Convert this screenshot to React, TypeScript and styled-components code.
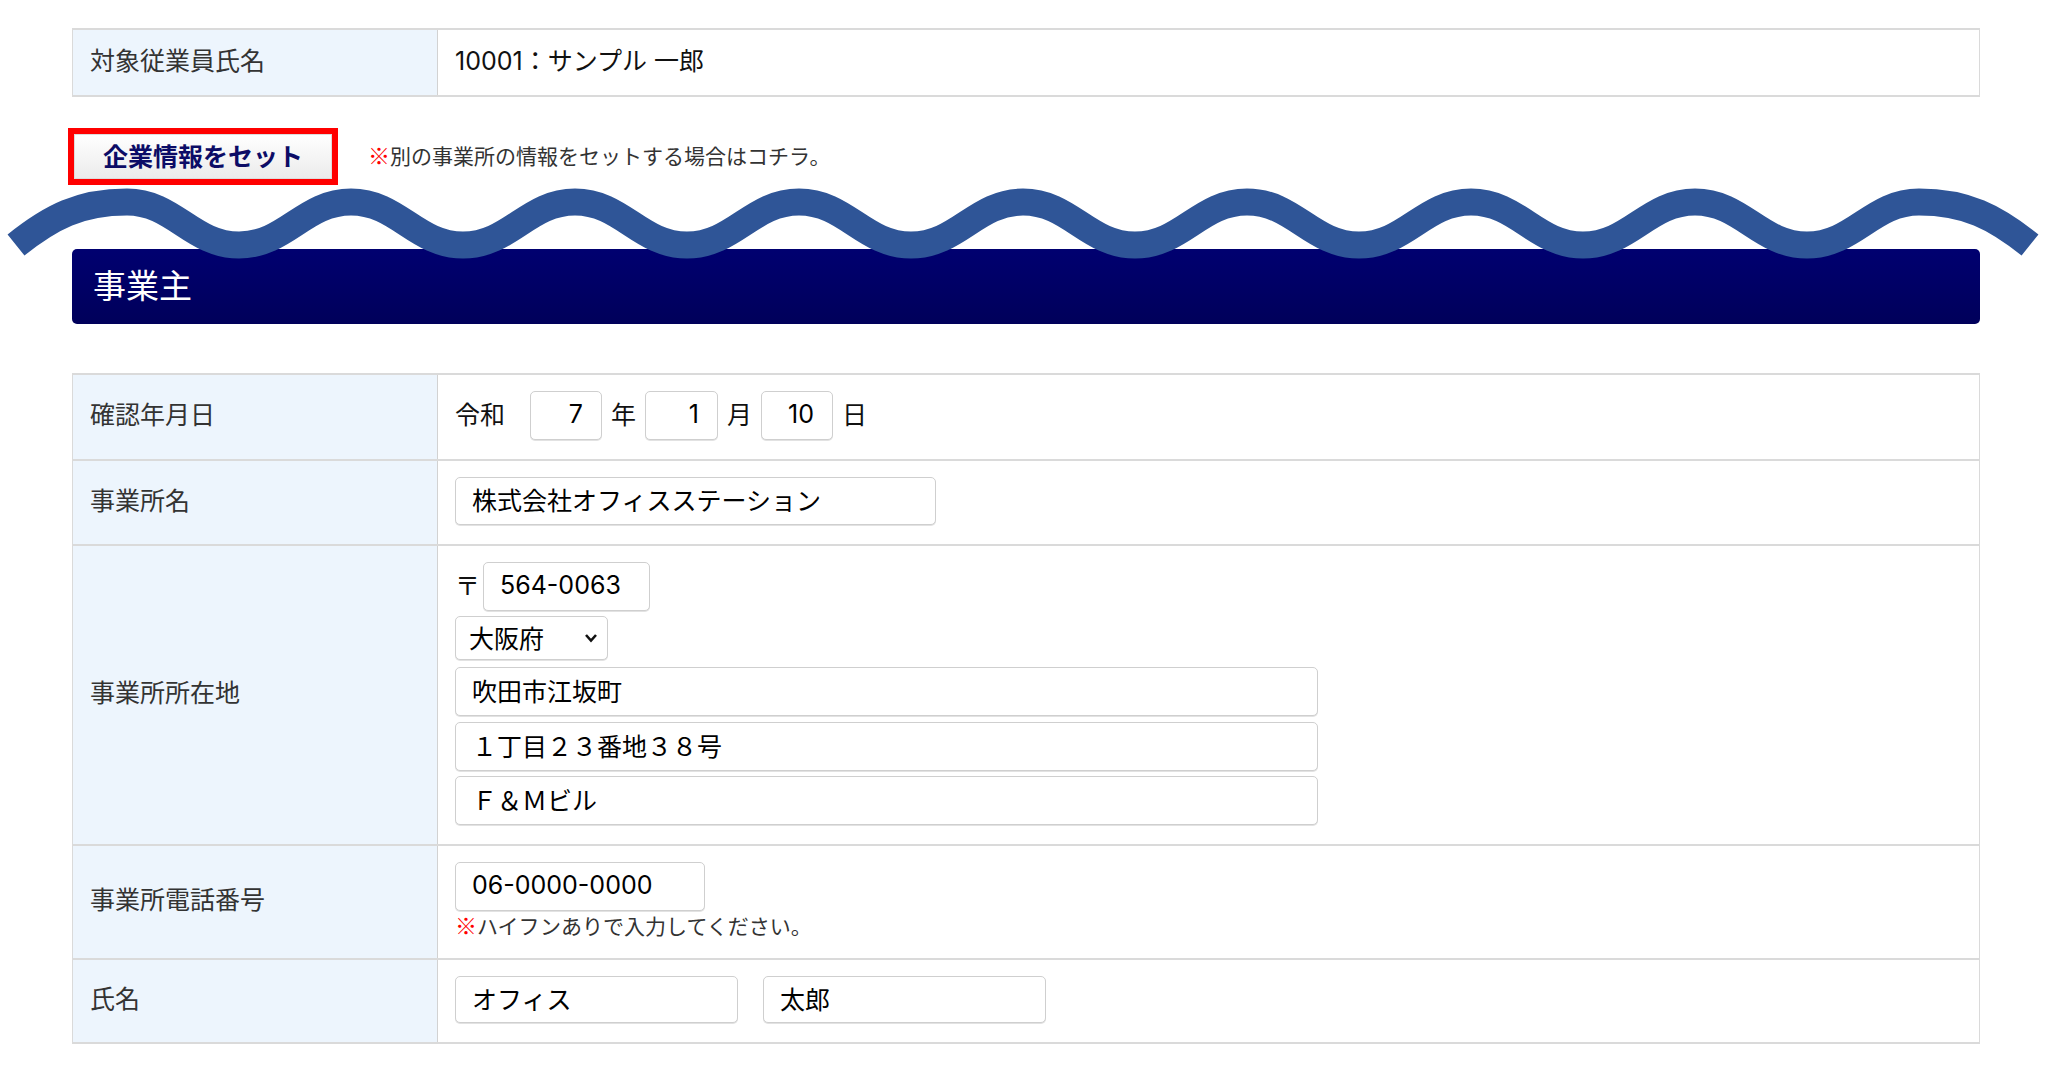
import React from "react";
import styled, { createGlobalStyle } from "styled-components";

const GlobalStyle = createGlobalStyle`
  html, body {
    margin: 0;
    padding: 0;
    background: #fff;
  }
  body {
    font-family: "Noto Sans CJK JP", "Noto Sans", sans-serif;
    color: #222;
  }
  * {
    box-sizing: border-box;
  }
`;

const valueFont = `Inter, "Noto Sans CJK JP", sans-serif`;

const Page = styled.div`
  position: relative;
  width: 2052px;
  padding: 28px 72px 26px;
`;

const FormTable = styled.table`
  width: 100%;
  border-collapse: collapse;
  table-layout: fixed;
  line-height: 1.2;
`;

const Th = styled.th`
  width: 365px;
  background: #edf5fd;
  color: #333;
  font-weight: normal;
  text-align: left;
  font-size: 25px;
  padding: 0 17px 8px;
  vertical-align: middle;
  border: 2px solid #dadada;
  border-left-width: 1px;
  border-right: 1px solid #d2d2d2;
`;

const Td = styled.td<{ $compact?: boolean }>`
  padding: ${(p) => (p.$compact ? "0 17px 4px" : "16px 17px 19px")};
  height: ${(p) => (p.$compact ? "67px" : "auto")};
  font-family: ${valueFont};
  font-size: 25px;
  color: #111;
  vertical-align: middle;
  border: 2px solid #dadada;
  border-right-width: 1px;
  border-left: 1px solid #d2d2d2;
`;

const SetRow = styled.div`
  display: flex;
  align-items: center;
  margin-top: 37px;
  padding-left: 2px;
`;

const SetButton = styled.button`
  width: 258px;
  height: 45px;
  border: none;
  outline: 6px solid #ff0000;
  background: linear-gradient(#ffffff, #ebebeb);
  box-shadow: inset 0 0 0 1px #dcdcdc;
  color: #0c0c66;
  font-family: "Noto Sans CJK JP", sans-serif;
  font-size: 25px;
  font-weight: bold;
  padding: 0 0 4px;
  cursor: pointer;
`;

const Note = styled.div<{ $top?: boolean }>`
  font-family: "Noto Sans CJK JP", sans-serif;
  font-size: 21px;
  line-height: 27px;
  color: #333;
  margin-left: ${(p) => (p.$top ? "36px" : "0")};
  padding-bottom: ${(p) => (p.$top ? "3px" : "0")};
  white-space: nowrap;
`;

const Mark = styled.span`
  color: #ff0000;
  font-weight: bold;
  font-size: 22px;
`;

const SectionBar = styled.h2`
  margin: 70px 0 0;
  height: 75px;
  display: flex;
  align-items: center;
  padding: 0 0 6px 21px;
  border-radius: 5px;
  background: linear-gradient(#000070, #00005a);
  color: #fff;
  font-size: 33px;
  font-weight: normal;
`;

const FormSection = styled.div`
  margin-top: 49px;
`;

const FieldRow = styled.div<{ $gap?: number }>`
  display: flex;
  align-items: center;
  gap: ${(p) => p.$gap ?? 9}px;
  font-family: "Noto Sans CJK JP", sans-serif;
`;

const FieldStack = styled.div`
  display: flex;
  flex-direction: column;
  align-items: flex-start;
`;

const TextInput = styled.input<{ $width: number; $height?: number; $right?: boolean; $mt?: number }>`
  width: ${(p) => p.$width}px;
  height: ${(p) => p.$height ?? 49}px;
  margin-top: ${(p) => p.$mt ?? 0}px;
  padding: 0 ${(p) => (p.$right ? "18px" : "16px")} 4px;
  border: 1px solid #cfcfcf;
  border-radius: 5px;
  box-shadow: 0 1px 0 #e2e2e2;
  background: #fff;
  color: #000;
  font-family: ${valueFont};
  font-size: 25px;
  text-align: ${(p) => (p.$right ? "right" : "left")};
  outline: none;
`;

const Unit = styled.span<{ $space?: number }>`
  padding-bottom: 6px;
  margin-right: ${(p) => p.$space ?? 0}px;
`;

const SelectWrap = styled.div`
  position: relative;
  margin-top: 5px;
  margin-bottom: 2px;
`;

const Select = styled.select`
  width: 153px;
  height: 44px;
  padding: 0 0 3px 13px;
  border: 1px solid #cfcfcf;
  border-radius: 5px;
  box-shadow: 0 1px 0 #e2e2e2;
  background: #fff;
  color: #000;
  font-family: "Noto Sans CJK JP", sans-serif;
  font-size: 25px;
  appearance: none;
  outline: none;
`;

const Chevron = styled.svg`
  position: absolute;
  right: 10px;
  top: 17px;
  pointer-events: none;
`;

const Wave = styled.svg`
  position: absolute;
  left: 0;
  top: 0;
  pointer-events: none;
  z-index: 2;
`;

const buildWave = () => {
  const h = 112;
  const x0 = 15;
  const low = 245;
  const high = 202;
  const n = 18;
  const pt = (i: number) => [x0 + h * i, i % 2 === 0 ? low : high];
  let d = `M${x0 + 1},${low}`;
  for (let i = 0; i < n; i++) {
    const [ax, ay] = pt(i);
    const [bx, by] = pt(i + 1);
    const c1 = i === 0 ? `${ax + 36},${ay - 28}` : `${ax + 0.42 * h},${ay}`;
    const c2 = i === n - 1 ? `${bx - 36},${by - 28}` : `${bx - 0.42 * h},${by}`;
    d += ` C${c1} ${c2} ${bx - (i === n - 1 ? 1 : 0)},${by}`;
  }
  return d;
};

const App: React.FC = () => {
  return (
    <Page>
      <GlobalStyle />
      <FormTable>
        <tbody>
          <tr>
            <Th>対象従業員氏名</Th>
            <Td $compact>10001：サンプル 一郎</Td>
          </tr>
        </tbody>
      </FormTable>

      <SetRow>
        <SetButton type="button">企業情報をセット</SetButton>
        <Note $top>
          <Mark>※</Mark>別の事業所の情報をセットする場合はコチラ。
        </Note>
      </SetRow>

      <SectionBar>事業主</SectionBar>

      <FormSection>
        <FormTable>
          <tbody>
            <tr>
              <Th>確認年月日</Th>
              <Td>
                <FieldRow>
                  <Unit $space={16}>令和</Unit>
                  <TextInput $width={72} $right defaultValue="7" />
                  <Unit>年</Unit>
                  <TextInput $width={73} $right defaultValue="1" />
                  <Unit>月</Unit>
                  <TextInput $width={72} $right defaultValue="10" />
                  <Unit>日</Unit>
                </FieldRow>
              </Td>
            </tr>
            <tr>
              <Th>事業所名</Th>
              <Td>
                <TextInput $width={481} $height={48} defaultValue="株式会社オフィスステーション" />
              </Td>
            </tr>
            <tr>
              <Th>事業所所在地</Th>
              <Td>
                <FieldStack>
                  <FieldRow $gap={8}>
                    <Unit $space={-5}>〒</Unit>
                    <TextInput $width={167} defaultValue="564-0063" />
                  </FieldRow>
                  <SelectWrap>
                    <Select defaultValue="大阪府">
                      <option>北海道</option>
                      <option>東京都</option>
                      <option>大阪府</option>
                      <option>京都府</option>
                    </Select>
                    <Chevron width="14" height="10" viewBox="0 0 14 10">
                      <path d="M2 2 L7 7.5 L12 2" fill="none" stroke="#111" strokeWidth="2.6" />
                    </Chevron>
                  </SelectWrap>
                  <TextInput $width={863} $mt={5} defaultValue="吹田市江坂町" />
                  <TextInput $width={863} $mt={6} defaultValue="１丁目２３番地３８号" />
                  <TextInput $width={863} $mt={5} defaultValue="Ｆ＆Ｍビル" />
                </FieldStack>
              </Td>
            </tr>
            <tr>
              <Th>事業所電話番号</Th>
              <Td>
                <FieldStack>
                  <TextInput $width={250} defaultValue="06-0000-0000" />
                  <Note>
                    <Mark>※</Mark>ハイフンありで入力してください。
                  </Note>
                </FieldStack>
              </Td>
            </tr>
            <tr>
              <Th>氏名</Th>
              <Td>
                <FieldRow $gap={25}>
                  <TextInput $width={283} $height={47} defaultValue="オフィス" />
                  <TextInput $width={283} $height={47} defaultValue="太郎" />
                </FieldRow>
              </Td>
            </tr>
          </tbody>
        </FormTable>
      </FormSection>

      <Wave width="2052" height="300" viewBox="0 0 2052 300">
        <path d={buildWave()} fill="none" stroke="#2f5597" strokeWidth="27" />
      </Wave>
    </Page>
  );
};

export default App;
